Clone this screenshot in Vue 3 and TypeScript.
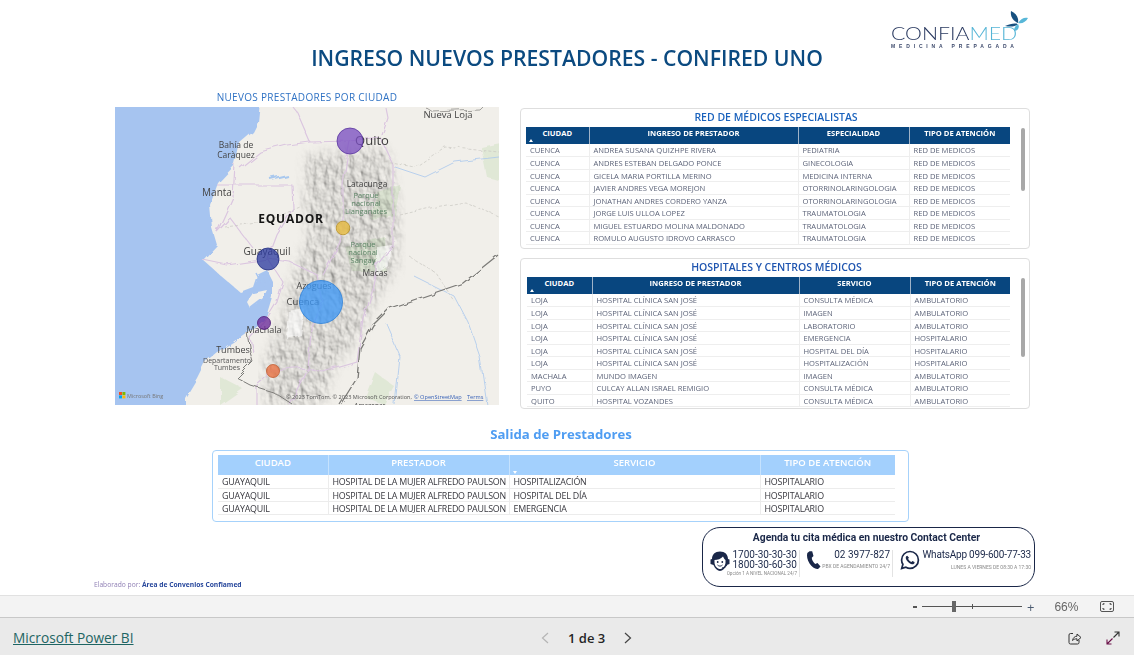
<script setup lang="ts">
const especialistas = [
  ["CUENCA", "ANDREA SUSANA QUIZHPE RIVERA", "PEDIATRIA", "RED DE MEDICOS"],
  ["CUENCA", "ANDRES ESTEBAN DELGADO PONCE", "GINECOLOGIA", "RED DE MEDICOS"],
  ["CUENCA", "GICELA MARIA PORTILLA MERINO", "MEDICINA INTERNA", "RED DE MEDICOS"],
  ["CUENCA", "JAVIER ANDRES VEGA MOREJON", "OTORRINOLARINGOLOGIA", "RED DE MEDICOS"],
  ["CUENCA", "JONATHAN ANDRES CORDERO YANZA", "OTORRINOLARINGOLOGIA", "RED DE MEDICOS"],
  ["CUENCA", "JORGE LUIS ULLOA LOPEZ", "TRAUMATOLOGIA", "RED DE MEDICOS"],
  ["CUENCA", "MIGUEL ESTUARDO MOLINA MALDONADO", "TRAUMATOLOGIA", "RED DE MEDICOS"],
  ["CUENCA", "ROMULO AUGUSTO IDROVO CARRASCO", "TRAUMATOLOGIA", "RED DE MEDICOS"],
];

const hospitales = [
  ["LOJA", "HOSPITAL CLÍNICA SAN JOSÉ", "CONSULTA MÉDICA", "AMBULATORIO"],
  ["LOJA", "HOSPITAL CLÍNICA SAN JOSÉ", "IMAGEN", "AMBULATORIO"],
  ["LOJA", "HOSPITAL CLÍNICA SAN JOSÉ", "LABORATORIO", "AMBULATORIO"],
  ["LOJA", "HOSPITAL CLÍNICA SAN JOSÉ", "EMERGENCIA", "HOSPITALARIO"],
  ["LOJA", "HOSPITAL CLÍNICA SAN JOSÉ", "HOSPITAL DEL DÍA", "HOSPITALARIO"],
  ["LOJA", "HOSPITAL CLÍNICA SAN JOSÉ", "HOSPITALIZACIÓN", "HOSPITALARIO"],
  ["MACHALA", "MUNDO IMAGEN", "IMAGEN", "AMBULATORIO"],
  ["PUYO", "CULCAY ALLAN ISRAEL REMIGIO", "CONSULTA MÉDICA", "AMBULATORIO"],
  ["QUITO", "HOSPITAL VOZANDES", "CONSULTA MÉDICA", "AMBULATORIO"],
];

const salidas = [
  ["GUAYAQUIL", "HOSPITAL DE LA MUJER ALFREDO PAULSON", "HOSPITALIZACIÓN", "HOSPITALARIO"],
  ["GUAYAQUIL", "HOSPITAL DE LA MUJER ALFREDO PAULSON", "HOSPITAL DEL DÍA", "HOSPITALARIO"],
  ["GUAYAQUIL", "HOSPITAL DE LA MUJER ALFREDO PAULSON", "EMERGENCIA", "HOSPITALARIO"],
];

const burbujas = [
  { x: 235, y: 34, r: 13, fill: "#7b4fc0", stroke: "#5a36a0" },
  { x: 228, y: 121, r: 6.8, fill: "#e6b93a", stroke: "#b8912a" },
  { x: 153, y: 152, r: 11, fill: "#2f3ea0", stroke: "#252f80" },
  { x: 206, y: 195, r: 21.5, fill: "#3d97f5", stroke: "#2b7fd8" },
  { x: 149, y: 216, r: 6.5, fill: "#6a2a9a", stroke: "#4f1d78" },
  { x: 158, y: 264, r: 6.5, fill: "#e8703f", stroke: "#c05a30" },
];

const carreteras = [
  "M235 34 L195 35 L172 38 L145 45 L125 61",
  "M195 35 L182 5 L178 0",
  "M235 34 L232 51 L228 78 L228 111 L225 135 L208 168",
  "M278 58 L278 138 L262 158 L258 178",
  "M102 78 L122 78 L177 78 L178 101 L162 128 L153 152",
  "M102 125 L115 111 L138 141",
  "M153 152 L175 155 L202 168 L208 195",
  "M208 195 L195 225 L192 261 L175 298",
  "M158 264 L192 261 L208 265 L242 255 L248 211 L258 178",
  "M88 153 L112 158 L153 152",
  "M149 216 L162 195 L168 175 L153 152",
  "M149 216 L135 231 L138 245",
  "M158 264 L142 278 L142 298",
  "M235 34 L265 30 L278 58",
  "M265 30 L272 10 L270 0",
  "M120 58 L118 90 L102 125",
];

const etiquetas = [
  { x: 333, y: 11, t: "Nueva Loja", s: 9.5, c: "#444" },
  { x: 121, y: 41, t: "Bahía de", s: 8.5, c: "#444" },
  { x: 121, y: 51, t: "Caràquez", s: 8.5, c: "#444" },
  { x: 102, y: 89, t: "Manta", s: 10, c: "#444" },
  { x: 257, y: 38, t: "Quito", s: 13, c: "#3c3c3c" },
  { x: 252, y: 80, t: "Latacunga", s: 8.5, c: "#444" },
  { x: 152, y: 148, t: "Guayaquil", s: 10, c: "#444" },
  { x: 260, y: 169, t: "Macas", s: 8.5, c: "#444" },
  { x: 199, y: 182, t: "Azogues", s: 9, c: "#444" },
  { x: 188, y: 198, t: "Cuenca", s: 9.5, c: "#444" },
  { x: 149, y: 226, t: "Machala", s: 9, c: "#444" },
  { x: 118, y: 246, t: "Tumbes", s: 9, c: "#444" },
  { x: 112, y: 255.5, t: "Departamento", s: 7, c: "#555" },
  { x: 112, y: 262.5, t: "Tumbes", s: 7, c: "#555" },
  { x: 251, y: 90.5, t: "Parque", s: 7.5, c: "#5b8465" },
  { x: 251, y: 98.5, t: "nacional", s: 7.5, c: "#5b8465" },
  { x: 251, y: 106.5, t: "Llanganates", s: 7.5, c: "#5b8465" },
  { x: 248, y: 139.5, t: "Parque", s: 7.5, c: "#5b8465" },
  { x: 248, y: 147.5, t: "nacional", s: 7.5, c: "#5b8465" },
  { x: 248, y: 155.5, t: "Sangay", s: 7.5, c: "#5b8465" },
];
</script>

<template>
  <div class="app">
    <div class="report">
      <div class="brand">
        <div class="logo">
          <svg class="petals" width="26" height="22" viewBox="0 0 26 22">
            <path d="M9 0 C14 2 17 7 16 12 C11 10 8 5 9 0Z" fill="#17507f" />
            <path d="M16 12 C19 7 23 6 26 7 C24 11 20 13 16 12Z" fill="#58b7d8" />
            <path d="M16 13 C12 12 8 13 3 15 C8 16 13 16 16 13Z" fill="#17507f" />
            <path d="M16 13 C13 15 12 17 12 20 C16 20 18 16 16 13Z" fill="#58b7d8" />
          </svg>
          <div class="logo-name">CONFIA<span>MED</span></div>
          <div class="logo-sub">MEDICINA PREPAGADA</div>
        </div>
      </div>
      <h1 class="title">INGRESO NUEVOS PRESTADORES - CONFIRED UNO</h1>

      <div class="main">
        <div class="map-col">
          <div class="map-title">NUEVOS PRESTADORES POR CIUDAD</div>
          <div class="map">
            <svg width="384" height="298" viewBox="0 0 384 298">
              <defs>
                <filter id="relief" x="-5%" y="-5%" width="110%" height="110%" color-interpolation-filters="sRGB">
                  <feTurbulence type="fractalNoise" baseFrequency="0.16 0.1" numOctaves="3" seed="11" result="n" />
                  <feDiffuseLighting in="n" surfaceScale="1.6" lighting-color="#ffffff" result="l">
                    <feDistantLight azimuth="315" elevation="62" />
                  </feDiffuseLighting>
                  <feGaussianBlur in="SourceAlpha" stdDeviation="6" result="m" />
                  <feComposite in="l" in2="m" operator="in" />
                  <feGaussianBlur stdDeviation="0.5" />
                </filter>
                <filter id="wiggle" x="-5%" y="-5%" width="110%" height="110%">
                  <feTurbulence type="fractalNoise" baseFrequency="0.06" numOctaves="3" seed="4" result="w" />
                  <feDisplacementMap in="SourceGraphic" in2="w" scale="6" />
                  <feGaussianBlur stdDeviation="0.3" />
                </filter>
              </defs>
              <rect width="384" height="298" fill="#a6c4f0" />
              <g filter="url(#wiggle)">
                <path d="M145 -5 L143 15 L138 25 L125 36 L120 58 L103 76 L95 98 L97 121 L102 138 L88 153 L105 168 L125 185 L138 180 L142 168 L152 163 L158 175 L158 191 L152 211 L132 225 L118 235 L102 245 L90 255 L82 271 L70 291 L70 303 L390 303 L390 -5Z" fill="#f1efea" />
                <path d="M132 195 L138 186 L152 183 L148 191 L135 201Z" fill="#f1efea" />
                <path d="M140 165 L146 176 M148 166 L150 180 M153 165 L155 178" stroke="#a6c4f0" stroke-width="1.5" fill="none" />
                <path d="M262 85 L285 78 L280 108 L255 112Z M230 140 L270 130 L272 165 L238 165Z M105 270 L128 282 L105 298Z M260 265 L280 280 L270 298 L250 290Z M366 40 L390 35 L390 75 L372 70Z" fill="#e0e8d6" />
              </g>
              <path class="relief" d="M192 48 L272 42 L284 110 L282 160 L262 190 L242 232 L218 262 L207 298 L150 298 L150 252 L166 215 L176 175 L194 130 L190 90Z" fill="#000" filter="url(#relief)" />
              <g filter="url(#wiggle)">
                <path d="M262 140 L277 138 L274 160 L262 168Z M174 205 L190 202 L186 228 L172 232Z" fill="#fff" opacity="0.6" />
                <path v-for="(d, i) in carreteras" :key="i" :d="d" fill="none" stroke="#dbc6e0" stroke-width="1.2" />
                <g fill="none" stroke="#c8c7c2" stroke-width="0.7" stroke-dasharray="3 2">
                  <path d="M285 108 L320 100 L350 95 L384 110" />
                  <path d="M295 150 L320 165 L340 195" />
                  <path d="M270 55 L300 60 L330 40 L384 45" />
                  <path d="M110 120 L150 115 L185 100" />
                </g>
                <g fill="none" stroke="#a9c8ee" stroke-width="0.8">
                  <path d="M280 60 L310 70 L340 55 L384 50" />
                  <path d="M300 170 L340 190 L353 215 L365 250 L372 298" />
                  <path d="M270 215 L285 250 L280 298" />
                  <path d="M155 72 L172 68" stroke-width="2" />
                </g>
                <path d="M383 148 L348 176 L275 201 L258 218 L245 241 L242 271 L225 298" fill="none" stroke="#7c7b78" stroke-width="1.3" />
                <path d="M132 225 L135 245 L138 255 L128 265 L122 271 L135 278 L158 285 L178 298" fill="none" stroke="#7c7b78" stroke-width="1" />
                <path d="M310 0 L318 5 L365 3 L368 0" fill="none" stroke="#8d8c88" stroke-width="0.8" />
              </g>
              <g>
                <text
                  v-for="e in etiquetas"
                  :key="e.t + e.x"
                  :x="e.x"
                  :y="e.y"
                  :font-size="e.s"
                  :fill="e.c"
                  text-anchor="middle"
                >{{ e.t }}</text>
                <text x="176" y="116" class="country">EQUADOR</text>
                <text x="255" y="301" font-size="6.5" fill="#444" text-anchor="middle">Amazonas</text>
              </g>
              <circle
                v-for="b in burbujas"
                :key="b.x"
                :cx="b.x"
                :cy="b.y"
                :r="b.r"
                :fill="b.fill"
                :stroke="b.stroke"
                fill-opacity="0.78"
                stroke-width="0.8"
              />
              <g>
                <rect x="4" y="285" width="3" height="3" fill="#f25022" />
                <rect x="7.4" y="285" width="3" height="3" fill="#7fba00" />
                <rect x="4" y="288.4" width="3" height="3" fill="#00a4ef" />
                <rect x="7.4" y="288.4" width="3" height="3" fill="#ffb900" />
                <text x="12" y="291" font-size="5.4" fill="#777">Microsoft Bing</text>
                <text x="171" y="292" font-size="5.6" fill="#555">© 2023 TomTom, © 2023 Microsoft Corporation,</text>
                <text x="299" y="292" font-size="5.6" fill="#3a63b8" text-decoration="underline">© OpenStreetMap</text>
                <text x="352" y="292" font-size="5.6" fill="#3a63b8" text-decoration="underline">Terms</text>
              </g>
            </svg>
          </div>
        </div>

        <div class="table-col">
          <div class="card card-a">
            <div class="card-title">RED DE MÉDICOS ESPECIALISTAS</div>
            <table class="grid grid-a">
              <colgroup><col class="a1" /><col class="a2" /><col class="a3" /><col class="a4" /></colgroup>
              <thead>
                <tr>
                  <th class="sorted">CIUDAD</th>
                  <th>INGRESO DE PRESTADOR</th>
                  <th>ESPECIALIDAD</th>
                  <th>TIPO DE ATENCIÓN</th>
                </tr>
              </thead>
              <tbody>
                <tr v-for="(fila, i) in especialistas" :key="i">
                  <td v-for="(c, j) in fila" :key="j">{{ c }}</td>
                </tr>
              </tbody>
            </table>
            <div class="thumb thumb-a"></div>
          </div>

          <div class="card card-b">
            <div class="card-title">HOSPITALES Y CENTROS MÉDICOS</div>
            <table class="grid grid-b">
              <colgroup><col class="b1" /><col class="b2" /><col class="b3" /><col class="b4" /></colgroup>
              <thead>
                <tr>
                  <th class="sorted">CIUDAD</th>
                  <th>INGRESO DE PRESTADOR</th>
                  <th>SERVICIO</th>
                  <th>TIPO DE ATENCIÓN</th>
                </tr>
              </thead>
              <tbody>
                <tr v-for="(fila, i) in hospitales" :key="i">
                  <td v-for="(c, j) in fila" :key="j">{{ c }}</td>
                </tr>
              </tbody>
            </table>
            <div class="thumb thumb-b"></div>
          </div>
        </div>
      </div>

      <h2 class="exit-title">Salida de Prestadores</h2>
      <div class="exit-card">
        <table class="exit-grid">
          <colgroup><col class="c1" /><col class="c2" /><col class="c3" /><col class="c4" /></colgroup>
          <thead>
            <tr>
              <th>CIUDAD</th>
              <th>PRESTADOR</th>
              <th class="sorted-down">SERVICIO</th>
              <th>TIPO DE ATENCIÓN</th>
            </tr>
          </thead>
          <tbody>
            <tr v-for="(fila, i) in salidas" :key="i">
              <td v-for="(c, j) in fila" :key="j">{{ c }}</td>
            </tr>
          </tbody>
        </table>
      </div>

      <div class="bottom">
        <div class="credit">Elaborado por: <b>Área de Convenios Confiamed</b></div>
        <div class="contact">
          <div class="contact-title">Agenda tu cita médica en nuestro Contact Center</div>
          <div class="contact-row">
            <div class="contact-item item-one">
              <svg width="22" height="21" viewBox="0 0 22 21">
                <path d="M11 0.5 C6 0.5 3 3.5 3 8 L1.5 8.5 L1.5 13 L4.5 14 C6 17.5 8.5 20 11 20 C13.5 20 16 17.5 17.5 14 L20.5 13 L20.5 8.5 L19 8 C19 3.5 16 0.5 11 0.5Z" fill="#1a2748" />
                <path d="M5.5 9 C8.5 9 12 8 14 5.5 C15 7.5 15.5 8.5 16.5 9 L16.5 12 C16 15.5 13.5 18 11 18 C8.5 18 6 15.5 5.5 12Z" fill="#fff" />
                <circle cx="8.7" cy="11" r="0.9" fill="#1a2748" />
                <circle cx="13.3" cy="11" r="0.9" fill="#1a2748" />
                <path d="M8.5 14 C10 15.5 12 15.5 13.5 14" stroke="#1a2748" fill="none" stroke-width="0.9" />
                <path d="M18 13.5 C17.5 16 15 17 13 16.8" stroke="#1a2748" fill="none" stroke-width="0.9" />
              </svg>
              <div class="num-block">
                <div class="num">1700-30-30-30</div>
                <div class="num">1800-30-60-30</div>
                <div class="tiny">Opción 1 A NIVEL NACIONAL 24/7</div>
              </div>
            </div>
            <div class="contact-item item-two">
              <svg width="15" height="20" viewBox="0 0 17 22">
                <path d="M4 1 L7 1 L8.5 6.5 L6.5 8.5 C6.8 11.5 8.5 14 10.5 15.5 L13 14.5 L16.5 18.5 L14 21 C11 22 7 19.5 4 15 C1.5 11 0.5 6 1.5 3Z" fill="#1a2748" />
              </svg>
              <div class="num-block">
                <div class="num">02 3977-827</div>
                <div class="tiny">PBX DE AGENDAMIENTO 24/7</div>
              </div>
            </div>
            <div class="contact-item item-three">
              <svg width="20" height="20" viewBox="0 0 20 20">
                <path d="M10 1.5 C5.3 1.5 1.6 5.3 1.6 9.9 C1.6 11.5 2 13 2.9 14.3 L1.7 18.4 L5.9 17.2 C7.1 17.9 8.5 18.3 10 18.3 C14.7 18.3 18.4 14.6 18.4 9.9 C18.4 5.3 14.7 1.5 10 1.5Z" fill="none" stroke="#1a2748" stroke-width="1.7" />
                <path d="M7.3 5.8 L6.2 6.3 C5.5 7.2 5.6 8.7 6.6 10.3 C7.8 12.2 9.9 13.8 11.9 14.2 C13.1 14.4 14.1 13.9 14.5 13 L14.5 11.9 L12.4 10.9 L11.5 12 C10 11.5 8.7 10.2 8.1 8.7 L9 7.8 Z" fill="#1a2748" />
              </svg>
              <div class="num-block">
                <div class="num">WhatsApp 099-600-77-33</div>
                <div class="tiny">LUNES A VIERNES DE 08:30 A 17:30</div>
              </div>
            </div>
          </div>
        </div>
      </div>
    </div>

    <div class="zoom-bar">
      <span class="minus"></span>
      <div class="slider"><i class="tick"></i><i class="handle"></i></div>
      <span class="plus">+</span>
      <span class="pct">66%</span>
      <svg width="14" height="11" viewBox="0 0 14 11" fill="none" stroke="#555">
        <rect x="0.5" y="0.5" width="13" height="10" rx="1.5" />
        <path d="M3 4 V2.8 H4.5 M9.5 2.8 H11 V4 M3 7 V8.2 H4.5 M9.5 8.2 H11 V7" stroke="#333" />
      </svg>
    </div>

    <div class="footer">
      <a class="pbi">Microsoft Power BI</a>
      <div class="pager">
        <svg width="8" height="12" viewBox="0 0 8 12" fill="none" stroke="#b5b5b5" stroke-width="1.2"><path d="M7 1 L1.5 6 L7 11" /></svg>
        <span>1 de 3</span>
        <svg width="8" height="12" viewBox="0 0 8 12" fill="none" stroke="#444" stroke-width="1.2"><path d="M1 1 L6.5 6 L1 11" /></svg>
      </div>
      <div class="foot-icons">
        <svg width="14" height="14" viewBox="0 0 14 14" fill="none" stroke="#333" stroke-width="1">
          <path d="M5 2.5 H2.5 Q1 2.5 1 4 V11.5 Q1 13 2.5 13 H9.5 Q11 13 11 11.5 V9" />
          <path d="M4.5 9.5 C5 6.8 6.8 5.2 9 5.2 V3 L13 6.5 L9 10 V7.8 C7.2 7.8 5.8 8.2 4.5 9.5Z" />
        </svg>
        <svg width="14" height="14" viewBox="0 0 14 14" fill="none" stroke-width="1.1">
          <path d="M8.5 1 H13 V5.5 M13 1 L7.5 6.5" stroke="#333" />
          <path d="M1 8.5 V13 H5.5 M1 13 L6.5 7.5" stroke="#6a1048" />
        </svg>
      </div>
    </div>
  </div>
</template>

<style scoped>
.app {
  width: 1134px;
  height: 655px;
  overflow: hidden;
  display: flex;
  flex-direction: column;
  background: #fff;
  font-family: "Open Sans", "Liberation Sans", sans-serif;
}

.report {
  height: 595px;
  flex-shrink: 0;
}

.brand {
  display: flex;
  justify-content: flex-end;
  height: 47px;
  padding: 10px 106px 0 0;
  box-sizing: border-box;
}

.logo {
  position: relative;
  width: 137px;
  height: 37px;
}

.petals {
  position: absolute;
  right: 0;
  top: 1px;
}

.logo-name {
  padding-top: 17px;
  font-family: Lato, "Open Sans", sans-serif;
  font-weight: 300;
  font-size: 17px;
  line-height: 14px;
  color: #27375e;
  white-space: nowrap;
  transform: scaleX(1.25);
  transform-origin: left;
}

.logo-name span {
  color: #55b5d6;
}

.logo-sub {
  margin-top: 2px;
  font-family: "Liberation Sans", sans-serif;
  font-weight: 700;
  font-size: 5px;
  line-height: 6px;
  letter-spacing: 3.85px;
  color: #3d4a6c;
  white-space: nowrap;
}

.title {
  margin: 0;
  height: 22px;
  line-height: 22px;
  text-align: center;
  font-size: 21.2px;
  font-weight: 600;
  color: #0b4a80;
}

.main {
  display: flex;
  gap: 21px;
  height: 319px;
  margin-top: 21px;
  padding-left: 115px;
}

.map-col {
  width: 384px;
}

.map-title {
  height: 17px;
  line-height: 14px;
  text-align: center;
  font-size: 10px;
  letter-spacing: 0.3px;
  color: #2f72c4;
}

.map {
  height: 298px;
  overflow: hidden;
}

.map svg {
  display: block;
}

.map text {
  font-family: "Open Sans", sans-serif;
}

.relief {
  mix-blend-mode: multiply;
  opacity: 0.85;
}

.map .country {
  font-size: 12px;
  font-weight: 700;
  letter-spacing: 0.8px;
  fill: #151515;
  text-anchor: middle;
}

.table-col {
  width: 510px;
  padding-top: 18px;
  display: flex;
  flex-direction: column;
  gap: 9px;
}

.card {
  position: relative;
  box-sizing: border-box;
  border: 1px solid #dedede;
  border-radius: 4px;
  overflow: hidden;
  background: #fff;
}

.card-a {
  height: 141px;
  padding: 0 19px 0 5px;
}

.card-b {
  height: 151px;
  padding: 0 19px 0 6px;
}

.card-title {
  height: 18px;
  margin-right: -16px;
  line-height: 16px;
  text-align: center;
  font-size: 10.5px;
  font-weight: 600;
  color: #1a62bd;
  white-space: nowrap;
}

.card-b .card-title {
  color: #1f55b0;
}

.grid {
  width: 484px;
  table-layout: fixed;
  border-collapse: collapse;
  font-size: 7.6px;
}

.grid-b {
  width: 483px;
}

.a1 { width: 63px; }
.a2 { width: 209px; }
.a3 { width: 111px; }
.a4 { width: 101px; }
.b1 { width: 65px; }
.b2 { width: 207px; }
.b3 { width: 111px; }
.b4 { width: 100px; }

.grid th {
  position: relative;
  height: 17px;
  padding: 0 0 6px;
  box-sizing: border-box;
  line-height: 10px;
  background: #08467f;
  color: #fff;
  font-weight: 700;
  border-left: 1px solid #9fb3c8;
  white-space: nowrap;
}

.grid th:first-child {
  border-left: 0;
}

.sorted::after {
  content: "";
  position: absolute;
  left: 3px;
  bottom: 2px;
  border-left: 2.5px solid transparent;
  border-right: 2.5px solid transparent;
  border-bottom: 3px solid #fff;
}

.grid td {
  height: 12.5px;
  padding: 1px 4px 0;
  box-sizing: border-box;
  line-height: 10.5px;
  color: #5d6479;
  border-bottom: 1px solid #eeeeee;
  border-left: 1px solid #eeeeee;
  white-space: nowrap;
  overflow: hidden;
}

.grid td:first-child {
  border-left: 0;
}

.thumb {
  position: absolute;
  right: 4px;
  width: 4px;
  border-radius: 2px;
  background: #a8a8a8;
}

.thumb-a {
  top: 19px;
  height: 63px;
}

.thumb-b {
  top: 19px;
  height: 79px;
}

.exit-title {
  margin: 18px 0 9px;
  height: 14px;
  line-height: 14px;
  text-align: center;
  font-size: 13.2px;
  font-weight: 700;
  color: #4f9df2;
  width: 1122px;
}

.exit-card {
  box-sizing: border-box;
  width: 697px;
  height: 72px;
  margin-left: 212px;
  padding: 4px 0 0 5px;
  border: 1.5px solid #a6d2fb;
  border-radius: 4px;
}

.exit-grid {
  width: 677px;
  table-layout: fixed;
  border-collapse: collapse;
  font-size: 8.9px;
}

.c1 { width: 110px; }
.c2 { width: 181px; }
.c3 { width: 251px; }
.c4 { width: 135px; }

.exit-grid th {
  position: relative;
  height: 20px;
  padding: 0 0 5px;
  box-sizing: border-box;
  background: #a3d0fd;
  color: #fff;
  font-weight: 600;
  font-size: 9.5px;
  border-left: 1px solid #c5e2fe;
}

.exit-grid th:first-child {
  border-left: 0;
}

.sorted-down::after {
  content: "";
  position: absolute;
  left: 3px;
  bottom: 1px;
  border-left: 2.5px solid transparent;
  border-right: 2.5px solid transparent;
  border-top: 3px solid #fff;
}

.exit-grid td {
  height: 13px;
  padding: 1px 4px 0;
  box-sizing: border-box;
  line-height: 11px;
  color: #38383f;
  letter-spacing: -0.2px;
  border-bottom: 1px solid #ececec;
  border-left: 1px solid #ececec;
  white-space: nowrap;
  overflow: hidden;
}

.exit-grid td:first-child {
  border-left: 0;
}

.bottom {
  display: flex;
  justify-content: space-between;
  align-items: flex-end;
  width: 941px;
  margin-top: 5px;
  padding-left: 94px;
}

.credit {
  font-size: 6.7px;
  line-height: 8px;
  margin-bottom: -2px;
  color: #8f7fb4;
}

.credit b {
  color: #27479c;
}

.contact {
  box-sizing: border-box;
  width: 333px;
  height: 60px;
  border: 1px solid #1a2748;
  border-radius: 18px;
  color: #1a2748;
  font-family: Roboto, "Open Sans", sans-serif;
}

.contact-title {
  margin-top: 3px;
  padding-right: 4px;
  text-align: center;
  font-size: 10.3px;
  font-weight: 700;
  line-height: 13px;
}

.contact-row {
  display: flex;
  margin-top: 6px;
  padding-left: 6px;
}

.contact-item {
  box-sizing: border-box;
  display: flex;
  align-items: flex-start;
  height: 27px;
}

.item-one {
  width: 91px;
  padding-right: 2px;
  border-right: 1px solid #e3e3e3;
  margin-right: 6px;
}

.item-one .num-block {
  width: 65px;
  margin-left: auto;
}

.item-one svg {
  margin-top: 1px;
}

.item-one .tiny {
  display: flex;
  justify-content: flex-end;
  margin-top: 1px;
  font-size: 4.6px;
}

.item-two {
  width: 87px;
  padding-right: 2px;
  border-right: 1px solid #e3e3e3;
  margin-right: 7px;
}

.item-three {
  width: 131px;
}

.item-two .num-block,
.item-three .num-block {
  flex: 1;
}

.item-three .num {
  letter-spacing: -0.2px;
}

.item-three .tiny {
  margin-top: 4px;
}

.num-block {
  text-align: right;
}

.num {
  font-size: 10px;
  line-height: 10px;
  white-space: nowrap;
}

.tiny {
  margin-top: 3px;
  font-size: 5px;
  line-height: 6px;
  color: #8a8a8a;
  white-space: nowrap;
}

.zoom-bar {
  box-sizing: border-box;
  height: 23px;
  display: flex;
  align-items: center;
  padding-left: 913px;
  background: #f3f3f3;
  border-top: 1px solid #e1e1e1;
  border-bottom: 1px solid #c8c8c8;
}

.minus {
  width: 4px;
  height: 2px;
  margin-right: 5px;
  background: #555;
}

.slider {
  position: relative;
  width: 100px;
  height: 1px;
  background: #555;
}

.slider .handle {
  position: absolute;
  left: 30px;
  top: -5px;
  width: 4px;
  height: 11px;
  background: #666;
}

.slider .tick {
  position: absolute;
  left: 50px;
  top: -2px;
  width: 1px;
  height: 5px;
  background: #555;
}

.plus {
  margin-left: 5px;
  font-size: 13px;
  color: #4a5a70;
}

.pct {
  margin: 0 22px 0 20px;
  font-size: 12px;
  color: #666;
  font-family: "Liberation Sans", sans-serif;
}

.footer {
  flex: 1;
  display: flex;
  align-items: center;
  position: relative;
  padding: 2px 14px 0 13px;
  background: #eaeaea;
}

.pbi {
  font-size: 13.7px;
  color: #1e6563;
  text-decoration: underline;
}

.pager {
  position: absolute;
  left: 541px;
  display: flex;
  align-items: center;
  gap: 19px;
  font-size: 13px;
  font-weight: 600;
  color: #252525;
}

.foot-icons {
  margin-left: auto;
  display: flex;
  gap: 24px;
}
</style>
